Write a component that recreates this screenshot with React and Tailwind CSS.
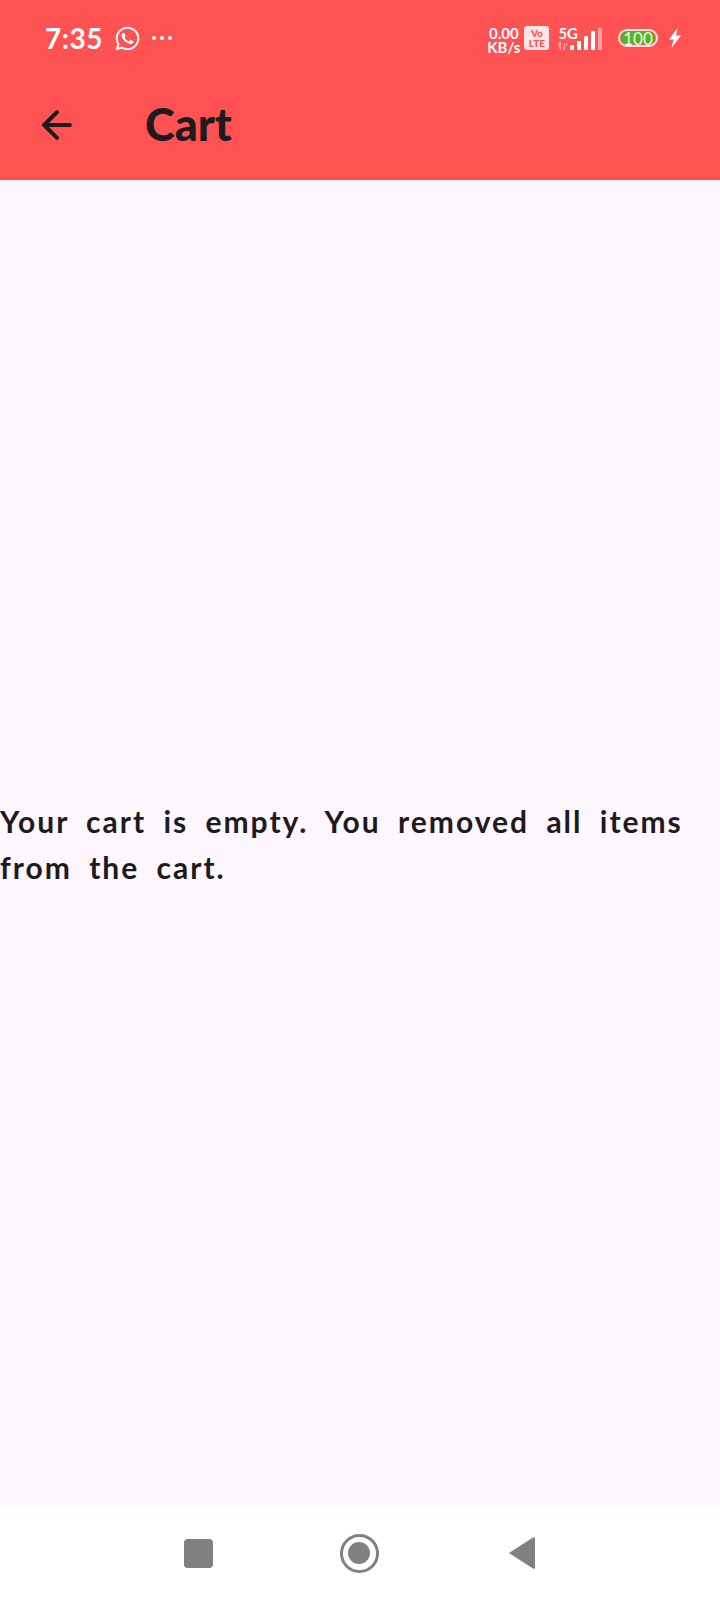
import { ArrowLeft } from "lucide-react";
import { FaWhatsapp } from "react-icons/fa";

const StatusBar = () => (
  <div className="flex h-[76px] items-center pl-[45px] pr-[38px] text-white">
    <span className="text-[28px] leading-none font-bold tracking-[0.5px]">7:35</span>
    <FaWhatsapp className="ml-[11px] h-[27px] w-[27px]" />
    <div className="ml-[11px] flex gap-[4px]">
      <span className="h-[4px] w-[4px] rounded-full bg-white" />
      <span className="h-[4px] w-[4px] rounded-full bg-white" />
      <span className="h-[4px] w-[4px] rounded-full bg-white" />
    </div>

    <div className="ml-auto flex items-center">
      <div className="mt-[3px] flex flex-col items-center text-[15px] leading-[14px] font-bold">
        <span>0.00</span>
        <span>KB/s</span>
      </div>
      <div className="ml-[4px] flex h-[24px] w-[25px] flex-col items-center justify-center rounded-[3px] bg-white/85 text-[10px] leading-[10px] font-black text-[#ff5252]">
        <span>Vo</span>
        <span>LTE</span>
      </div>
      <div className="ml-[9px] flex flex-col">
        <span className="text-[15px] leading-[15px] font-bold">5G</span>
        <span className="h-[9px]" />
      </div>
      <svg className="-ml-[21px] mt-[1px]" width="46" height="24" viewBox="0 0 46 24" fill="#fff">
        <path d="M1 17l3-3v9H3zM6 23l2 0v-7l-1 0z M9 16h1v3H9z" opacity=".45" />
        <rect x="13" y="18" width="4" height="5" rx="1" />
        <rect x="20" y="14" width="4" height="9" rx="1" />
        <rect x="27" y="9" width="4" height="14" rx="1" />
        <rect x="34" y="4" width="4" height="19" rx="1" />
        <rect x="41" y="1" width="4" height="22" rx="1" opacity=".45" />
      </svg>
      <div className="ml-[15px] flex h-[18px] w-[40px] items-center justify-center rounded-full border-2 border-white/85 bg-[#ff5252] p-[1px]">
        <span className="flex h-full w-full items-center justify-center rounded-full bg-[#4fb81e] text-[17px] leading-none font-normal text-white/90">
          100
        </span>
      </div>
      <svg className="ml-[10px]" width="14" height="20" viewBox="0 0 14 20" fill="#fff">
        <path d="M9.5 0 1 11.5h4.5L3.5 20l9.5-12.5H8z" />
      </svg>
    </div>
  </div>
);

const NavBar = () => (
  <div className="flex h-[94px] items-center justify-center bg-white">
    <div className="-ml-[1px] h-[29px] w-[29px] rounded-[4px] bg-[#808080]" />
    <div className="ml-[127px] flex h-[39px] w-[39px] items-center justify-center rounded-full border-[3px] border-[#808080]">
      <div className="h-[22px] w-[22px] rounded-full bg-[#808080]" />
    </div>
    <svg className="ml-[129px]" width="28" height="34" viewBox="0 0 28 34" fill="#808080">
      <path d="M1 17 25 1.5c1-.6 2 0 2 1v29c0 1-1 1.6-2 1z" />
    </svg>
  </div>
);

export default function App() {
  return (
    <div className="flex h-screen flex-col bg-[#fef7ff] font-['Lato',sans-serif] text-[#1d1b20]">
      <header className="bg-[#ff5252]">
        <StatusBar />
        <div className="flex h-[104px] items-center pb-[7px]">
          <ArrowLeft className="ml-[35px] h-[44px] w-[44px]" strokeWidth={2.2} />
          <h1 className="ml-[66px] text-[45px] leading-none font-black">Cart</h1>
        </div>
      </header>

      <main className="flex flex-1 items-center pt-[2px]">
        <p className="text-[30px] leading-[46px] font-bold tracking-[2px] [word-spacing:8px]">
          Your cart is empty. You removed all items from the cart.
        </p>
      </main>

      <NavBar />
    </div>
  );
}
